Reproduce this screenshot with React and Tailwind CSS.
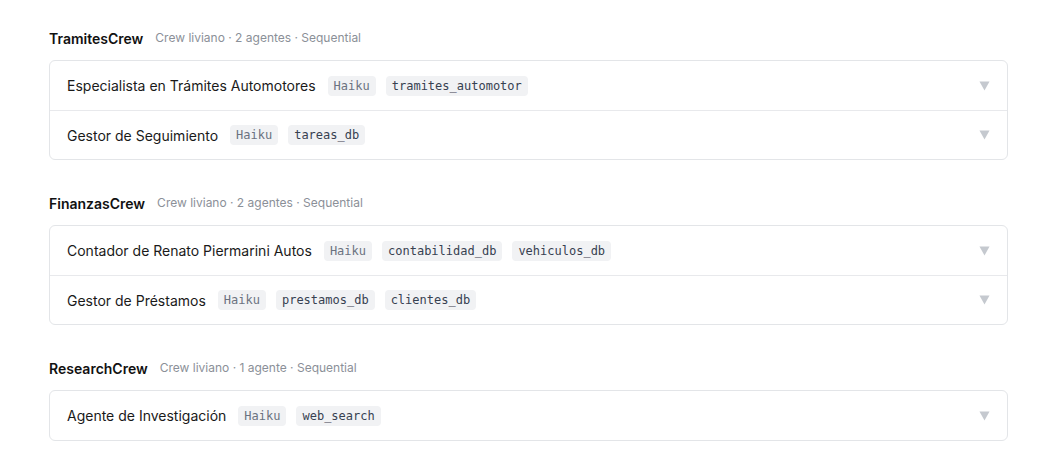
import React from "react";

const crews = [
  {
    name: "TramitesCrew",
    meta: "Crew liviano · 2 agentes · Sequential",
    agents: [
      { name: "Especialista en Trámites Automotores", tools: ["tramites_automotor"] },
      { name: "Gestor de Seguimiento", tools: ["tareas_db"] },
    ],
  },
  {
    name: "FinanzasCrew",
    meta: "Crew liviano · 2 agentes · Sequential",
    agents: [
      { name: "Contador de Renato Piermarini Autos", tools: ["contabilidad_db", "vehiculos_db"] },
      { name: "Gestor de Préstamos", tools: ["prestamos_db", "clientes_db"] },
    ],
  },
  {
    name: "ResearchCrew",
    meta: "Crew liviano · 1 agente · Sequential",
    agents: [{ name: "Agente de Investigación", tools: ["web_search"] }],
  },
];

const mono = { fontFamily: '"DejaVu Sans Mono", "Liberation Mono", monospace' };

function Chip({ children, muted }) {
  return (
    <span
      className={`inline-flex h-5 items-center rounded px-1.5 text-[12px] bg-[#f1f2f4] ${muted ? "text-[#6b7280]" : "text-[#374151]"}`}
      style={mono}
    >
      {children}
    </span>
  );
}

export default function App() {
  return (
    <div className="min-h-[468px] bg-white px-[49px] pt-[28px] text-[#111827]" style={{ fontFamily: 'Inter, "Noto Sans", sans-serif' }}>
      {crews.map((c) => (
        <div key={c.name} className="mb-[33px]">
          <div className="flex h-5 items-center gap-3">
            <span className="text-[14px] font-semibold text-[#111111]">{c.name}</span>
            <span className="text-[12px] text-[#8b9098]">{c.meta}</span>
          </div>
          <div className="mt-[12px] rounded-md border border-[#e3e5e8] bg-white">
            {c.agents.map((a, i) => (
              <div
                key={a.name}
                className={`flex h-[49px] items-center pl-[17px] pr-[17px] ${i > 0 ? "border-t border-[#e8e9ec]" : ""}`}
              >
                <span className="mr-3 text-[14px] text-[#1a1a1a]">{a.name}</span>
                <div className="flex items-center gap-2.5">
                  <Chip muted>Haiku</Chip>
                  {a.tools.map((t) => (
                    <Chip key={t}>{t}</Chip>
                  ))}
                </div>
                <svg className="ml-auto" width="11" height="10" viewBox="0 0 11 10">
                  <path d="M0.5 0.5 L10.5 0.5 L5.5 9.5 Z" fill="#c5c9cf" />
                </svg>
              </div>
            ))}
          </div>
        </div>
      ))}
    </div>
  );
}
